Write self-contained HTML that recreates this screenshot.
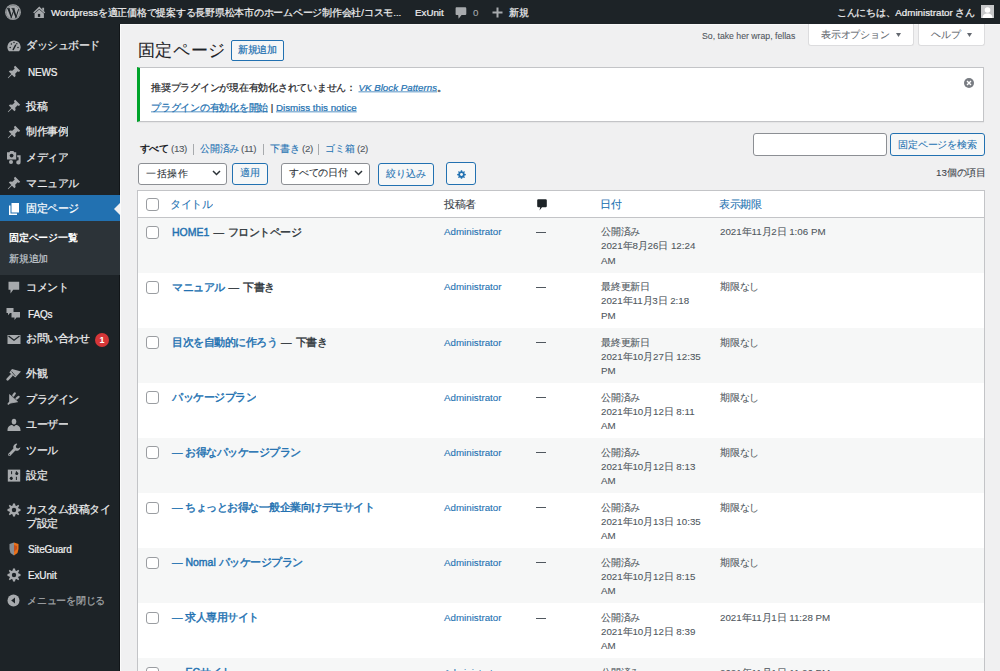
<!DOCTYPE html>
<html><head><meta charset="utf-8"><title>固定ページ</title>
<style>
html,body{margin:0;padding:0}
body{width:1000px;height:671px;overflow:hidden;position:relative;background:#f0f0f1;font-family:"Liberation Sans",sans-serif}
.t{position:absolute;white-space:nowrap;transform-origin:0 0}
svg{display:block}
b{font-weight:700}
.title b{font-weight:500;-webkit-text-stroke:0.55px currentColor}
.d{margin:0 1.5px}
</style></head><body>
<div style="position:absolute;left:0px;top:0px;width:1000px;height:24px;background:#1d2327"></div>
<div style="position:absolute;left:0px;top:24px;width:120px;height:647px;background:#1d2327"></div>
<div style="position:absolute;left:119px;top:24px;width:1px;height:647px;background:#111518"></div>
<div style="position:absolute;left:120px;top:24px;width:1px;height:647px;background:#fbfbfb"></div>
<div style="position:absolute;left:120px;top:24px;width:880px;height:1px;background:#f8f8f8"></div>
<svg style="position:absolute;left:4px;top:4px;" width="18" height="17" viewBox="0 0 18 17"><circle cx="9" cy="8.2" r="7.9" fill="#a7aaad"/><circle cx="9" cy="8.2" r="6.9" fill="none" stroke="#1d2327" stroke-width=".45" opacity=".6"/>
<path d="M3.3 4.4 H5.6 L7.9 12.4 L7.1 14.2 Z M7.9 4.4 H10.3 L12.6 12.4 L11.8 14.2 Z" fill="#1d2327"/><path d="M7.1 14 L9.3 7.4 M11.8 14 L14.6 5.2" stroke="#1d2327" stroke-width="1"/><path d="M2.8 4.4 H6 M7.4 4.4 H10.6" stroke="#1d2327" stroke-width=".7"/></svg>
<svg style="position:absolute;left:28px;top:2px;" width="24" height="20" viewBox="0 0 24 20"><path d="M5.1 10.4 L11.3 4.5 L17.3 10.4 L16.2 11.3 L11.3 6.7 L6.2 11.3 Z" fill="#a7aaad"/><path d="M14.2 5.8 H16.1 V9.2 L14.2 7.5Z" fill="#a7aaad"/><path d="M6.6 11.6 L11.3 7.6 L15.9 11.6 V15.9 H6.6Z" fill="#a7aaad"/><rect x="9.9" y="11.9" width="2.3" height="3" fill="#1d2327"/></svg>
<div class="t side" style="-webkit-text-stroke:0.28px currentColor;left:51px;top:2.50px;font-size:13.000px;line-height:26.67px;height:26.67px;transform:scale(0.75);color:#f0f0f1;font-weight:400;">Wordpressを適正価格で提案する長野県松本市のホームページ制作会社/コスモ...</div>
<div class="t side" style="-webkit-text-stroke:0.28px currentColor;left:415px;top:2.50px;font-size:13.000px;line-height:26.67px;height:26.67px;transform:scale(0.75);color:#f0f0f1;font-weight:400;">ExUnit</div>
<svg style="position:absolute;left:454.5px;top:6.5px;" width="12" height="12" viewBox="0 0 12 12"><path d="M1.3 0.3 H10.2 Q11.3 0.3 11.3 1.4 V7 Q11.3 8.1 10.2 8.1 H6.6 L3.6 11.7 L3.2 8.1 H1.3 Q0.6 8.1 0.6 7 V1.4 Q0.6 0.3 1.3 0.3Z" fill="#a7aaad"/></svg>
<div class="t " style="-webkit-text-stroke:0.12px currentColor;left:473px;top:2.50px;font-size:13.000px;line-height:26.67px;height:26.67px;transform:scale(0.75);color:#a7aaad;font-weight:400;">0</div>
<svg style="position:absolute;left:492px;top:7px;" width="11" height="11" viewBox="0 0 11 11"><path d="M4.5 0.5 H6.5 V4.5 H10.5 V6.5 H6.5 V10.5 H4.5 V6.5 H0.5 V4.5 H4.5 Z" fill="#a7aaad"/></svg>
<div class="t side" style="-webkit-text-stroke:0.28px currentColor;left:509px;top:2.50px;font-size:13.000px;line-height:26.67px;height:26.67px;transform:scale(0.75);color:#f0f0f1;font-weight:400;">新規</div>
<div class="t side" style="-webkit-text-stroke:0.28px currentColor;left:836px;top:2.50px;font-size:13.000px;line-height:26.67px;height:26.67px;transform:scale(0.75);color:#f0f0f1;font-weight:400;width:185.33px;text-align:right;">こんにちは、Administrator さん</div>
<div style="position:absolute;left:981px;top:5px;width:13px;height:13px;background:#c6c7c9"></div>
<svg style="position:absolute;left:981px;top:5px;" width="13" height="13" viewBox="0 0 13 13"><circle cx="6.5" cy="5" r="2.8" fill="#fff"/><path d="M1.5 13 C1.7 9.2 3.8 8.4 6.5 8.4 C9.2 8.4 11.3 9.2 11.5 13Z" fill="#fff"/></svg>
<div style="position:absolute;left:0px;top:195px;width:120px;height:26px;background:#2271b1"></div>
<div style="position:absolute;left:0px;top:221px;width:120px;height:54px;background:#2c3338"></div>
<svg style="position:absolute;left:114px;top:203px;" width="6" height="12" viewBox="0 0 6 12"><path d="M6 0 L0 6 L6 12Z" fill="#f0f0f1"/></svg>
<svg style="position:absolute;left:7px;top:38.8px;" width="14" height="14" viewBox="0 0 14 14"><path d="M1.4 11.6 A6.6 6.6 0 1 1 12.6 11.6 L12 12.2 H2 Z" fill="#a7aaad"/><path d="M6.2 10.6 L8.6 6.2" stroke="#1d2327" stroke-width="1.4" stroke-linecap="round"/><circle cx="3.2" cy="8.4" r=".75" fill="#1d2327"/><circle cx="4.4" cy="5" r=".75" fill="#1d2327"/><circle cx="7" cy="3.6" r=".75" fill="#1d2327"/><circle cx="9.8" cy="4.8" r=".75" fill="#1d2327"/><circle cx="11" cy="8.4" r=".75" fill="#1d2327"/></svg>
<div class="t side" style="-webkit-text-stroke:0.28px currentColor;left:26.2px;top:35.00px;font-size:14.000px;line-height:26.67px;height:26.67px;transform:scale(0.75);color:#f0f0f1;font-weight:400;">ダッシュボード</div>
<svg style="position:absolute;left:7px;top:64.5px;" width="14" height="14" viewBox="0 0 14 14"><path d="M8.2 0.8 L13.2 5.8 L11.9 7.1 L10.6 6.3 L8.2 8.7 L8.6 11 L7.4 12.2 L4.9 9.7 L1.2 13.2 L0.8 12.8 L4.3 9.1 L1.8 6.6 L3 5.4 L5.3 5.8 L7.7 3.4 L6.9 2.1 Z" fill="#a7aaad"/></svg>
<div class="t side" style="-webkit-text-stroke:0.28px currentColor;left:27.5px;top:62.50px;font-size:13.333px;line-height:26.67px;height:26.67px;transform:scale(0.75);color:#f0f0f1;font-weight:400;letter-spacing:-0.200px">NEWS</div>
<svg style="position:absolute;left:7px;top:99.3px;" width="14" height="14" viewBox="0 0 14 14"><path d="M8.2 0.8 L13.2 5.8 L11.9 7.1 L10.6 6.3 L8.2 8.7 L8.6 11 L7.4 12.2 L4.9 9.7 L1.2 13.2 L0.8 12.8 L4.3 9.1 L1.8 6.6 L3 5.4 L5.3 5.8 L7.7 3.4 L6.9 2.1 Z" fill="#a7aaad"/></svg>
<div class="t side" style="-webkit-text-stroke:0.28px currentColor;left:26.2px;top:95.50px;font-size:14.000px;line-height:26.67px;height:26.67px;transform:scale(0.75);color:#f0f0f1;font-weight:400;">投稿</div>
<svg style="position:absolute;left:7px;top:124.9px;" width="14" height="14" viewBox="0 0 14 14"><path d="M8.2 0.8 L13.2 5.8 L11.9 7.1 L10.6 6.3 L8.2 8.7 L8.6 11 L7.4 12.2 L4.9 9.7 L1.2 13.2 L0.8 12.8 L4.3 9.1 L1.8 6.6 L3 5.4 L5.3 5.8 L7.7 3.4 L6.9 2.1 Z" fill="#a7aaad"/></svg>
<div class="t side" style="-webkit-text-stroke:0.28px currentColor;left:26.2px;top:121.10px;font-size:14.000px;line-height:26.67px;height:26.67px;transform:scale(0.75);color:#f0f0f1;font-weight:400;">制作事例</div>
<svg style="position:absolute;left:7px;top:150.6px;" width="14" height="14" viewBox="0 0 14 14"><path d="M0 1.2 H2.4 L3.2 0 H6.4 L7.2 1.2 H9.2 V8.6 H0Z" fill="#a7aaad"/><circle cx="4.6" cy="4.6" r="1.9" fill="#1d2327"/><path d="M10.2 4.2 H13.6 V11.2 A2.2 2.2 0 1 1 11.6 9.2 V6.2 H10.2Z" fill="#a7aaad"/><circle cx="4" cy="11" r="2" fill="#a7aaad"/></svg>
<div class="t side" style="-webkit-text-stroke:0.28px currentColor;left:26.2px;top:146.80px;font-size:14.000px;line-height:26.67px;height:26.67px;transform:scale(0.75);color:#f0f0f1;font-weight:400;">メディア</div>
<svg style="position:absolute;left:7px;top:176.3px;" width="14" height="14" viewBox="0 0 14 14"><path d="M8.2 0.8 L13.2 5.8 L11.9 7.1 L10.6 6.3 L8.2 8.7 L8.6 11 L7.4 12.2 L4.9 9.7 L1.2 13.2 L0.8 12.8 L4.3 9.1 L1.8 6.6 L3 5.4 L5.3 5.8 L7.7 3.4 L6.9 2.1 Z" fill="#a7aaad"/></svg>
<div class="t side" style="-webkit-text-stroke:0.28px currentColor;left:26.2px;top:172.50px;font-size:14.000px;line-height:26.67px;height:26.67px;transform:scale(0.75);color:#f0f0f1;font-weight:400;">マニュアル</div>
<svg style="position:absolute;left:7px;top:201.5px;" width="14" height="14" viewBox="0 0 14 14"><path d="M4.5 1 H12 V10.5 H4.5Z" fill="#fff"/><path d="M2 3.5 H3.5 V11.5 H10 V13 H2Z" fill="#fff"/></svg>
<div class="t side" style="-webkit-text-stroke:0.28px currentColor;left:26.2px;top:197.70px;font-size:14.000px;line-height:26.67px;height:26.67px;transform:scale(0.75);color:#fff;font-weight:400;">固定ページ</div>
<svg style="position:absolute;left:7px;top:280.5px;" width="14" height="14" viewBox="0 0 14 14"><path d="M1.5 0.8 H12.2 V8.8 H6.2 L3.5 12.6 V8.8 H1.5Z" fill="#a7aaad"/></svg>
<div class="t side" style="-webkit-text-stroke:0.28px currentColor;left:26.2px;top:276.70px;font-size:14.000px;line-height:26.67px;height:26.67px;transform:scale(0.75);color:#f0f0f1;font-weight:400;">コメント</div>
<svg style="position:absolute;left:6px;top:306.5px;" width="15" height="14" viewBox="0 0 15 14"><path d="M0.5 1 H7.5 V6 H4 L2 8.2 V6 H0.5Z" fill="#a7aaad"/><path d="M5.5 5 H14 V10.5 H10.5 L8.5 13 V10.5 H5.5Z" fill="#a7aaad"/></svg>
<div class="t side" style="-webkit-text-stroke:0.28px currentColor;left:27.5px;top:304.50px;font-size:13.333px;line-height:26.67px;height:26.67px;transform:scale(0.75);color:#f0f0f1;font-weight:400;letter-spacing:-0.200px">FAQs</div>
<svg style="position:absolute;left:7px;top:333.2px;" width="14" height="12" viewBox="0 0 14 12"><path d="M0.5 2 H13.5 V11 H0.5Z" fill="#a7aaad"/><path d="M1.5 3 L7 7.2 L12.5 3" fill="none" stroke="#1d2327" stroke-width="1.2"/></svg>
<div class="t side" style="-webkit-text-stroke:0.28px currentColor;left:26.2px;top:328.40px;font-size:14.000px;line-height:26.67px;height:26.67px;transform:scale(0.75);color:#f0f0f1;font-weight:400;">お問い合わせ</div>
<svg style="position:absolute;left:4px;top:365.5px;" width="20" height="18" viewBox="0 0 20 18"><path d="M8 3 L17 5.6 L11.3 11.6 L5.4 6.6 Z" fill="#a7aaad"/><path d="M7.6 5.4 L11.4 10" stroke="#1d2327" stroke-width=".7"/><path d="M7.4 9.4 L3.6 13.4" stroke="#a7aaad" stroke-width="2.6" stroke-linecap="round"/></svg>
<div class="t side" style="-webkit-text-stroke:0.28px currentColor;left:26.2px;top:362.70px;font-size:14.000px;line-height:26.67px;height:26.67px;transform:scale(0.75);color:#f0f0f1;font-weight:400;">外観</div>
<svg style="position:absolute;left:4px;top:390.0px;" width="20" height="18" viewBox="0 0 20 18"><path d="M5.6 4.6 L13.6 11.8 L5.6 13.2 Z" fill="#a7aaad" stroke="#a7aaad" stroke-width=".8" stroke-linejoin="round"/><path d="M5.8 12.4 L4.4 13.8" stroke="#a7aaad" stroke-width="1.8" stroke-linecap="round"/><path d="M10.8 3.4 L9.3 5.5 M14.6 6.8 L12.5 8.6" stroke="#a7aaad" stroke-width="2.2" stroke-linecap="round"/></svg>
<div class="t side" style="-webkit-text-stroke:0.28px currentColor;left:26.2px;top:388.50px;font-size:14.000px;line-height:26.67px;height:26.67px;transform:scale(0.75);color:#f0f0f1;font-weight:400;">プラグイン</div>
<svg style="position:absolute;left:7px;top:417.7px;" width="14" height="14" viewBox="0 0 14 14"><ellipse cx="7" cy="3.6" rx="2.3" ry="2.9" fill="#a7aaad"/><path d="M0.5 12.4 C0.5 8.4 3 7 5.2 7 L7 8.6 L8.8 7 C11 7 13.5 8.4 13.5 12.4 V13 H0.5Z" fill="#a7aaad"/></svg>
<div class="t side" style="-webkit-text-stroke:0.28px currentColor;left:26.2px;top:413.90px;font-size:14.000px;line-height:26.67px;height:26.67px;transform:scale(0.75);color:#f0f0f1;font-weight:400;">ユーザー</div>
<svg style="position:absolute;left:7px;top:442.5px;" width="14" height="14" viewBox="0 0 14 14"><path d="M9.8 0.6 A3.8 3.8 0 0 0 6.4 5.6 L1.1 10.9 A1.5 1.5 0 0 0 3.1 12.9 L8.4 7.6 A3.8 3.8 0 0 0 13.4 4.2 L11.2 5.6 L9.4 5 L8.8 3.2 L10.2 1Z" fill="#a7aaad"/><circle cx="2.3" cy="11.7" r=".6" fill="#1d2327"/></svg>
<div class="t side" style="-webkit-text-stroke:0.28px currentColor;left:26.2px;top:439.70px;font-size:14.000px;line-height:26.67px;height:26.67px;transform:scale(0.75);color:#f0f0f1;font-weight:400;">ツール</div>
<svg style="position:absolute;left:7px;top:469.0px;" width="14" height="14" viewBox="0 0 14 14"><path d="M0.8 0.6 H13.2 V12.6 H0.8Z" fill="#a7aaad"/><path d="M4.6 2.2 V5.2 M4.6 7.8 V11 M9.4 2.2 V5.2 M9.4 7.8 V11" stroke="#1d2327" stroke-width="1"/><circle cx="4.2" cy="9.2" r="1.5" fill="#1d2327"/><circle cx="9.8" cy="4.4" r="1.5" fill="#1d2327"/></svg>
<div class="t side" style="-webkit-text-stroke:0.28px currentColor;left:26.2px;top:465.20px;font-size:14.000px;line-height:26.67px;height:26.67px;transform:scale(0.75);color:#f0f0f1;font-weight:400;">設定</div>
<svg style="position:absolute;left:8px;top:542.1px;" width="12" height="14" viewBox="0 0 12 14"><path d="M1.5 2 L6 0.5 V13.5 L2.5 11 L1.5 7Z" fill="#8a8f95"/><path d="M6 0.5 L10.5 2 L10.5 7 L9.5 11 L6 13.5Z" fill="#e8721c"/><path d="M6 3 L9 4 V7 L6 10Z" fill="#c9501a"/></svg>
<div class="t side" style="-webkit-text-stroke:0.28px currentColor;left:27.5px;top:540.10px;font-size:13.333px;line-height:26.67px;height:26.67px;transform:scale(0.75);color:#f0f0f1;font-weight:400;letter-spacing:-0.200px">SiteGuard</div>
<svg style="position:absolute;left:7px;top:567.9px;" width="14" height="14" viewBox="0 0 14 14"><path d="M6 0.5 H8 L8.4 2.4 L9.6 2.9 L11.2 1.8 L12.2 2.8 L11.1 4.4 L11.6 5.6 L13.5 6 V8 L11.6 8.4 L11.1 9.6 L12.2 11.2 L11.2 12.2 L9.6 11.1 L8.4 11.6 L8 13.5 H6 L5.6 11.6 L4.4 11.1 L2.8 12.2 L1.8 11.2 L2.9 9.6 L2.4 8.4 L0.5 8 V6 L2.4 5.6 L2.9 4.4 L1.8 2.8 L2.8 1.8 L4.4 2.9 L5.6 2.4 Z" fill="#a7aaad"/><circle cx="7" cy="7" r="2.2" fill="#1d2327"/></svg>
<div class="t side" style="-webkit-text-stroke:0.28px currentColor;left:27.5px;top:565.90px;font-size:13.333px;line-height:26.67px;height:26.67px;transform:scale(0.75);color:#f0f0f1;font-weight:400;letter-spacing:-0.200px">ExUnit</div>
<svg style="position:absolute;left:7px;top:503.4px;" width="14" height="14" viewBox="0 0 14 14"><path d="M6 0.5 H8 L8.4 2.4 L9.6 2.9 L11.2 1.8 L12.2 2.8 L11.1 4.4 L11.6 5.6 L13.5 6 V8 L11.6 8.4 L11.1 9.6 L12.2 11.2 L11.2 12.2 L9.6 11.1 L8.4 11.6 L8 13.5 H6 L5.6 11.6 L4.4 11.1 L2.8 12.2 L1.8 11.2 L2.9 9.6 L2.4 8.4 L0.5 8 V6 L2.4 5.6 L2.9 4.4 L1.8 2.8 L2.8 1.8 L4.4 2.9 L5.6 2.4 Z" fill="#a7aaad"/><circle cx="7" cy="7" r="2.2" fill="#1d2327"/></svg>
<div class="t side" style="-webkit-text-stroke:0.28px currentColor;left:26.2px;top:498.80px;font-size:14.000px;line-height:26.67px;height:26.67px;transform:scale(0.75);color:#f0f0f1;font-weight:400;">カスタム投稿タイ</div>
<div class="t side" style="-webkit-text-stroke:0.28px currentColor;left:26.2px;top:512.70px;font-size:14.000px;line-height:26.67px;height:26.67px;transform:scale(0.75);color:#f0f0f1;font-weight:400;">プ設定</div>
<div class="t " style="-webkit-text-stroke:0px currentColor;left:9px;top:227.50px;font-size:13.000px;line-height:26.67px;height:26.67px;transform:scale(0.75);color:#fff;font-weight:700;">固定ページ一覧</div>
<div class="t side" style="-webkit-text-stroke:0.28px currentColor;left:9px;top:248.50px;font-size:13.000px;line-height:26.67px;height:26.67px;transform:scale(0.75);color:rgba(240,246,252,.7);font-weight:400;">新規追加</div>
<div style="position:absolute;left:95px;top:332.5px;width:14px;height:14px;background:#d63638;border-radius:50%"></div>
<div class="t " style="-webkit-text-stroke:0px currentColor;left:95px;top:329.50px;font-size:12.000px;line-height:26.67px;height:26.67px;transform:scale(0.75);color:#fff;font-weight:700;width:18.67px;text-align:center;">1</div>
<svg style="position:absolute;left:7px;top:594px;" width="13" height="13" viewBox="0 0 13 13"><circle cx="6.5" cy="6.5" r="6" fill="#a7aaad"/><path d="M8 3.5 L4.2 6.5 L8 9.5Z" fill="#1d2327"/></svg>
<div class="t side" style="-webkit-text-stroke:0.28px currentColor;left:27px;top:590.50px;font-size:13.000px;line-height:26.67px;height:26.67px;transform:scale(0.75);color:#a7aaad;font-weight:400;">メニューを閉じる</div>
<div class="t " style="-webkit-text-stroke:0.12px currentColor;left:702px;top:25.50px;font-size:11.600px;line-height:26.67px;height:26.67px;transform:scale(0.75);color:#50575e;font-weight:400;">So, take her wrap, fellas</div>
<div style="position:absolute;left:808px;top:24px;width:104px;height:21px;background:#fff;border:1px solid #dcdcde;border-top:none;border-radius:0 0 3px 3px"></div>
<div class="t " style="-webkit-text-stroke:0.12px currentColor;left:821px;top:25.00px;font-size:13.000px;line-height:26.67px;height:26.67px;transform:scale(0.75);color:#646970;font-weight:400;">表示オプション</div>
<svg style="position:absolute;left:896px;top:33px;" width="5" height="4" viewBox="0 0 5 4"><path d="M0 0 H5 L2.5 4Z" fill="#646970"/></svg>
<div style="position:absolute;left:918px;top:24px;width:65px;height:21px;background:#fff;border:1px solid #dcdcde;border-top:none;border-radius:0 0 3px 3px"></div>
<div class="t " style="-webkit-text-stroke:0.12px currentColor;left:931px;top:25.00px;font-size:13.000px;line-height:26.67px;height:26.67px;transform:scale(0.75);color:#646970;font-weight:400;">ヘルプ</div>
<svg style="position:absolute;left:967px;top:33px;" width="5" height="4" viewBox="0 0 5 4"><path d="M0 0 H5 L2.5 4Z" fill="#646970"/></svg>
<div class="t nostroke" style="-webkit-text-stroke:0.12px currentColor;left:138px;top:40.00px;font-size:23.000px;line-height:26.67px;height:26.67px;transform:scale(0.75);color:#1d2327;font-weight:400;">固定ページ</div>
<div style="position:absolute;left:231px;top:40px;width:51px;height:19px;border:1px solid #2271b1;border-radius:2px;background:#f6f7f7"></div>
<div class="t side" style="-webkit-text-stroke:0.28px currentColor;left:231px;top:40.00px;font-size:13.000px;line-height:26.67px;height:26.67px;transform:scale(0.75);color:#2271b1;font-weight:400;width:70.67px;text-align:center;">新規追加</div>
<div style="position:absolute;left:137px;top:67px;width:843px;height:53px;background:#fff;border:1px solid #c3c4c7;border-left:3px solid #00a32a;box-shadow:0 1px 1px rgba(0,0,0,.04)"></div>
<div class="t side" style="-webkit-text-stroke:0.28px currentColor;left:151px;top:78.00px;font-size:13.000px;line-height:26.67px;height:26.67px;transform:scale(0.75);color:#1d2327;font-weight:400;">推奨プラグインが現在有効化されていません： <span style="color:#2271b1;font-style:italic;text-decoration:underline">VK Block Patterns</span>。</div>
<div class="t side" style="-webkit-text-stroke:0.28px currentColor;left:151px;top:97.50px;font-size:13.000px;line-height:26.67px;height:26.67px;transform:scale(0.75);color:#1d2327;font-weight:400;"><span style="color:#2271b1;text-decoration:underline">プラグインの有効化を開始</span> | <span style="color:#2271b1;text-decoration:underline">Dismiss this notice</span></div>
<svg style="position:absolute;left:964px;top:78px;" width="10" height="10" viewBox="0 0 10 10"><circle cx="5" cy="5" r="5" fill="#787c82"/><path d="M3 3 L7 7 M7 3 L3 7" stroke="#fff" stroke-width="1.4"/></svg>
<div class="t " style="-webkit-text-stroke:0px currentColor;left:140px;top:139.00px;font-size:13.000px;line-height:26.67px;height:26.67px;transform:scale(0.75);color:#1d2327;font-weight:700;letter-spacing:-0.533px">すべて</div>
<div class="t " style="-webkit-text-stroke:0.12px currentColor;left:171px;top:139.00px;font-size:13.000px;line-height:26.67px;height:26.67px;transform:scale(0.75);color:#50575e;font-weight:400;letter-spacing:-0.467px">(13)</div>
<div class="t " style="-webkit-text-stroke:0.12px currentColor;left:241px;top:139.00px;font-size:13.000px;line-height:26.67px;height:26.67px;transform:scale(0.75);color:#50575e;font-weight:400;letter-spacing:-0.467px">(11)</div>
<div class="t " style="-webkit-text-stroke:0.12px currentColor;left:301.5px;top:139.00px;font-size:13.000px;line-height:26.67px;height:26.67px;transform:scale(0.75);color:#50575e;font-weight:400;letter-spacing:-0.467px">(2)</div>
<div class="t " style="-webkit-text-stroke:0.12px currentColor;left:356.5px;top:139.00px;font-size:13.000px;line-height:26.67px;height:26.67px;transform:scale(0.75);color:#50575e;font-weight:400;letter-spacing:-0.467px">(2)</div>
<div class="t " style="-webkit-text-stroke:0.12px currentColor;left:200px;top:139.00px;font-size:13.000px;line-height:26.67px;height:26.67px;transform:scale(0.75);color:#2271b1;font-weight:400;">公開済み</div>
<div class="t " style="-webkit-text-stroke:0.12px currentColor;left:270px;top:139.00px;font-size:13.000px;line-height:26.67px;height:26.67px;transform:scale(0.75);color:#2271b1;font-weight:400;">下書き</div>
<div class="t " style="-webkit-text-stroke:0.12px currentColor;left:325px;top:139.00px;font-size:13.000px;line-height:26.67px;height:26.67px;transform:scale(0.75);color:#2271b1;font-weight:400;">ゴミ箱</div>
<div style="position:absolute;left:193.2px;top:143.5px;width:1px;height:11px;background:#a7aaad"></div>
<div style="position:absolute;left:263.2px;top:143.5px;width:1px;height:11px;background:#a7aaad"></div>
<div style="position:absolute;left:318.2px;top:143.5px;width:1px;height:11px;background:#a7aaad"></div>
<div style="position:absolute;left:753px;top:133px;width:132px;height:21px;background:#fff;border:1px solid #8c8f94;border-radius:3px"></div>
<div style="position:absolute;left:890px;top:133px;width:93px;height:21px;background:#f6f7f7;border:1px solid #2271b1;border-radius:3px"></div>
<div class="t " style="-webkit-text-stroke:0.12px currentColor;left:890px;top:134.50px;font-size:13.000px;line-height:26.67px;height:26.67px;transform:scale(0.75);color:#2271b1;font-weight:400;width:126.67px;text-align:center;">固定ページを検索</div>
<div style="position:absolute;left:138px;top:162.5px;width:87px;height:20px;background:#fff;border:1px solid #8c8f94;border-radius:3px"></div>
<div class="t " style="-webkit-text-stroke:0.12px currentColor;left:145.5px;top:163.00px;font-size:13.867px;line-height:26.67px;height:26.67px;transform:scale(0.75);color:#2c3338;font-weight:400;">一括操作</div>
<svg style="position:absolute;left:212px;top:170px;" width="9" height="6" viewBox="0 0 9 6"><path d="M1 1 L4.5 4.5 L8 1" fill="none" stroke="#2c3338" stroke-width="1.5"/></svg>
<div style="position:absolute;left:232px;top:162.5px;width:34px;height:20px;background:#f6f7f7;border:1px solid #2271b1;border-radius:3px"></div>
<div class="t " style="-webkit-text-stroke:0.12px currentColor;left:232px;top:163.00px;font-size:13.000px;line-height:26.67px;height:26.67px;transform:scale(0.75);color:#2271b1;font-weight:400;width:48.00px;text-align:center;">適用</div>
<div style="position:absolute;left:281px;top:162.5px;width:87px;height:20px;background:#fff;border:1px solid #8c8f94;border-radius:3px"></div>
<div class="t " style="-webkit-text-stroke:0.12px currentColor;left:288.5px;top:163.00px;font-size:13.467px;line-height:26.67px;height:26.67px;transform:scale(0.75);color:#2c3338;font-weight:400;">すべての日付</div>
<svg style="position:absolute;left:354px;top:170px;" width="9" height="6" viewBox="0 0 9 6"><path d="M1 1 L4.5 4.5 L8 1" fill="none" stroke="#2c3338" stroke-width="1.5"/></svg>
<div style="position:absolute;left:378px;top:163px;width:54px;height:21px;background:#f6f7f7;border:1px solid #2271b1;border-radius:3px"></div>
<div class="t " style="-webkit-text-stroke:0.12px currentColor;left:378px;top:164.00px;font-size:13.000px;line-height:26.67px;height:26.67px;transform:scale(0.75);color:#2271b1;font-weight:400;width:74.67px;text-align:center;">絞り込み</div>
<div style="position:absolute;left:446.2px;top:162px;width:28.3px;height:20.5px;background:#f6f7f7;border:1px solid #2271b1;border-radius:3px"></div>
<svg style="position:absolute;left:456.5px;top:169.5px;" width="9" height="9" viewBox="0 0 10 10"><path d="M4.3 0.3 H5.7 L6 1.7 L6.9 2 L8.1 1.3 L8.8 2 L8.1 3.2 L8.4 4.1 L9.8 4.4 V5.8 L8.4 6.1 L8.1 7 L8.8 8.2 L8.1 8.9 L6.9 8.2 L6 8.5 L5.7 9.8 H4.3 L4 8.5 L3.1 8.2 L1.9 8.9 L1.2 8.2 L1.9 7 L1.6 6.1 L0.2 5.8 V4.4 L1.6 4.1 L1.9 3.2 L1.2 2 L1.9 1.3 L3.1 2 L4 1.7 Z" fill="#2271b1"/><circle cx="5" cy="5" r="1.6" fill="#f6f7f7"/></svg>
<div class="t " style="-webkit-text-stroke:0.12px currentColor;left:936px;top:163.00px;font-size:13.000px;line-height:26.67px;height:26.67px;transform:scale(0.75);color:#3c434a;font-weight:400;width:65.33px;text-align:right;">13個の項目</div>
<div style="position:absolute;left:137px;top:190px;width:846px;height:481px;background:#fff;border:1px solid #c3c4c7;border-bottom:none"></div>
<div style="position:absolute;left:138px;top:217px;width:846px;height:1px;background:#c3c4c7"></div>
<div style="position:absolute;left:146.2px;top:198.1px;width:12.6px;height:12.6px;background:#fff;border:1.2px solid #9a9da1;border-radius:3px;box-sizing:border-box"></div>
<div class="t " style="-webkit-text-stroke:0.12px currentColor;left:170px;top:194.00px;font-size:14.000px;line-height:26.67px;height:26.67px;transform:scale(0.75);color:#2271b1;font-weight:400;">タイトル</div>
<div class="t " style="-webkit-text-stroke:0.12px currentColor;left:443.5px;top:194.20px;font-size:14.000px;line-height:26.67px;height:26.67px;transform:scale(0.75);color:#3c434a;font-weight:400;">投稿者</div>
<svg style="position:absolute;left:537px;top:199px;" width="10" height="12" viewBox="0 0 10 12"><path d="M1.3 0.2 H8.7 Q9.8 0.2 9.8 1.3 V7 Q9.8 8.2 8.7 8.2 H5 L2.5 11.6 L3.2 8.2 H1.3 Q0.2 8.2 0.2 7 V1.3 Q0.2 0.2 1.3 0.2Z" fill="#1d2327"/></svg>
<div class="t " style="-webkit-text-stroke:0.12px currentColor;left:600px;top:194.20px;font-size:14.000px;line-height:26.67px;height:26.67px;transform:scale(0.75);color:#2271b1;font-weight:400;">日付</div>
<div class="t " style="-webkit-text-stroke:0.12px currentColor;left:718.5px;top:194.20px;font-size:14.000px;line-height:26.67px;height:26.67px;transform:scale(0.75);color:#2271b1;font-weight:400;">表示期限</div>
<div style="position:absolute;left:138px;top:218.0px;width:846px;height:55px;background:#f6f7f7"></div>
<div style="position:absolute;left:146.2px;top:226.2px;width:12.6px;height:12.6px;background:#fff;border:1.2px solid #9a9da1;border-radius:3px;box-sizing:border-box"></div>
<div class="t title" style="-webkit-text-stroke:0.3px currentColor;left:171.5px;top:221.60px;font-size:14.000px;line-height:26.67px;height:26.67px;transform:scale(0.75);color:#2271b1;font-weight:400;"><b>HOME1</b> <span style="color:#2c3338;font-weight:400;-webkit-text-stroke:0.45px currentColor"><span class="d">—</span> フロントページ</span></div>
<div class="t " style="-webkit-text-stroke:0.12px currentColor;left:444px;top:222.40px;font-size:13.000px;line-height:26.67px;height:26.67px;transform:scale(0.75);color:#2271b1;font-weight:400;">Administrator</div>
<div style="position:absolute;left:536px;top:232px;width:9.5px;height:1px;background:#50575e"></div>
<div class="t " style="-webkit-text-stroke:0.12px currentColor;left:601px;top:222.40px;font-size:13.000px;line-height:26.67px;height:26.67px;transform:scale(0.75);color:#50575e;font-weight:400;">公開済み</div>
<div class="t " style="-webkit-text-stroke:0.12px currentColor;left:601px;top:236.40px;font-size:13.000px;line-height:26.67px;height:26.67px;transform:scale(0.75);color:#50575e;font-weight:400;">2021年8月26日 12:24</div>
<div class="t " style="-webkit-text-stroke:0.12px currentColor;left:601px;top:250.90px;font-size:13.000px;line-height:26.67px;height:26.67px;transform:scale(0.75);color:#50575e;font-weight:400;">AM</div>
<div class="t " style="-webkit-text-stroke:0.12px currentColor;left:720px;top:222.40px;font-size:13.000px;line-height:26.67px;height:26.67px;transform:scale(0.75);color:#50575e;font-weight:400;">2021年11月2日 1:06 PM</div>
<div style="position:absolute;left:146.2px;top:281.26px;width:12.6px;height:12.6px;background:#fff;border:1.2px solid #9a9da1;border-radius:3px;box-sizing:border-box"></div>
<div class="t title" style="-webkit-text-stroke:0.3px currentColor;left:171.5px;top:276.66px;font-size:14.000px;line-height:26.67px;height:26.67px;transform:scale(0.75);color:#2271b1;font-weight:400;"><b>マニュアル</b> <span style="color:#2c3338;font-weight:400;-webkit-text-stroke:0.45px currentColor"><span class="d">—</span> 下書き</span></div>
<div class="t " style="-webkit-text-stroke:0.12px currentColor;left:444px;top:277.46px;font-size:13.000px;line-height:26.67px;height:26.67px;transform:scale(0.75);color:#2271b1;font-weight:400;">Administrator</div>
<div style="position:absolute;left:536px;top:287px;width:9.5px;height:1px;background:#50575e"></div>
<div class="t " style="-webkit-text-stroke:0.12px currentColor;left:601px;top:277.46px;font-size:13.000px;line-height:26.67px;height:26.67px;transform:scale(0.75);color:#50575e;font-weight:400;">最終更新日</div>
<div class="t " style="-webkit-text-stroke:0.12px currentColor;left:601px;top:291.46px;font-size:13.000px;line-height:26.67px;height:26.67px;transform:scale(0.75);color:#50575e;font-weight:400;">2021年11月3日 2:18</div>
<div class="t " style="-webkit-text-stroke:0.12px currentColor;left:601px;top:305.96px;font-size:13.000px;line-height:26.67px;height:26.67px;transform:scale(0.75);color:#50575e;font-weight:400;">PM</div>
<div class="t " style="-webkit-text-stroke:0.12px currentColor;left:720px;top:277.46px;font-size:13.000px;line-height:26.67px;height:26.67px;transform:scale(0.75);color:#50575e;font-weight:400;">期限なし</div>
<div style="position:absolute;left:138px;top:328.12px;width:846px;height:55px;background:#f6f7f7"></div>
<div style="position:absolute;left:146.2px;top:336.32px;width:12.6px;height:12.6px;background:#fff;border:1.2px solid #9a9da1;border-radius:3px;box-sizing:border-box"></div>
<div class="t title" style="-webkit-text-stroke:0.3px currentColor;left:171.5px;top:331.72px;font-size:14.000px;line-height:26.67px;height:26.67px;transform:scale(0.75);color:#2271b1;font-weight:400;"><b>目次を自動的に作ろう</b> <span style="color:#2c3338;font-weight:400;-webkit-text-stroke:0.45px currentColor"><span class="d">—</span> 下書き</span></div>
<div class="t " style="-webkit-text-stroke:0.12px currentColor;left:444px;top:332.52px;font-size:13.000px;line-height:26.67px;height:26.67px;transform:scale(0.75);color:#2271b1;font-weight:400;">Administrator</div>
<div style="position:absolute;left:536px;top:342px;width:9.5px;height:1px;background:#50575e"></div>
<div class="t " style="-webkit-text-stroke:0.12px currentColor;left:601px;top:332.52px;font-size:13.000px;line-height:26.67px;height:26.67px;transform:scale(0.75);color:#50575e;font-weight:400;">最終更新日</div>
<div class="t " style="-webkit-text-stroke:0.12px currentColor;left:601px;top:346.52px;font-size:13.000px;line-height:26.67px;height:26.67px;transform:scale(0.75);color:#50575e;font-weight:400;">2021年10月27日 12:35</div>
<div class="t " style="-webkit-text-stroke:0.12px currentColor;left:601px;top:361.02px;font-size:13.000px;line-height:26.67px;height:26.67px;transform:scale(0.75);color:#50575e;font-weight:400;">PM</div>
<div class="t " style="-webkit-text-stroke:0.12px currentColor;left:720px;top:332.52px;font-size:13.000px;line-height:26.67px;height:26.67px;transform:scale(0.75);color:#50575e;font-weight:400;">期限なし</div>
<div style="position:absolute;left:146.2px;top:391.38px;width:12.6px;height:12.6px;background:#fff;border:1.2px solid #9a9da1;border-radius:3px;box-sizing:border-box"></div>
<div class="t title" style="-webkit-text-stroke:0.3px currentColor;left:171.5px;top:386.78px;font-size:14.000px;line-height:26.67px;height:26.67px;transform:scale(0.75);color:#2271b1;font-weight:400;"><b>パッケージプラン</b></div>
<div class="t " style="-webkit-text-stroke:0.12px currentColor;left:444px;top:387.58px;font-size:13.000px;line-height:26.67px;height:26.67px;transform:scale(0.75);color:#2271b1;font-weight:400;">Administrator</div>
<div style="position:absolute;left:536px;top:397px;width:9.5px;height:1px;background:#50575e"></div>
<div class="t " style="-webkit-text-stroke:0.12px currentColor;left:601px;top:387.58px;font-size:13.000px;line-height:26.67px;height:26.67px;transform:scale(0.75);color:#50575e;font-weight:400;">公開済み</div>
<div class="t " style="-webkit-text-stroke:0.12px currentColor;left:601px;top:401.58px;font-size:13.000px;line-height:26.67px;height:26.67px;transform:scale(0.75);color:#50575e;font-weight:400;">2021年10月12日 8:11</div>
<div class="t " style="-webkit-text-stroke:0.12px currentColor;left:601px;top:416.08px;font-size:13.000px;line-height:26.67px;height:26.67px;transform:scale(0.75);color:#50575e;font-weight:400;">AM</div>
<div class="t " style="-webkit-text-stroke:0.12px currentColor;left:720px;top:387.58px;font-size:13.000px;line-height:26.67px;height:26.67px;transform:scale(0.75);color:#50575e;font-weight:400;">期限なし</div>
<div style="position:absolute;left:138px;top:438.24px;width:846px;height:55px;background:#f6f7f7"></div>
<div style="position:absolute;left:146.2px;top:446.44px;width:12.6px;height:12.6px;background:#fff;border:1.2px solid #9a9da1;border-radius:3px;box-sizing:border-box"></div>
<div class="t title" style="-webkit-text-stroke:0.3px currentColor;left:171.5px;top:441.84px;font-size:14.000px;line-height:26.67px;height:26.67px;transform:scale(0.75);color:#2271b1;font-weight:400;"><b>— お得なパッケージプラン</b></div>
<div class="t " style="-webkit-text-stroke:0.12px currentColor;left:444px;top:442.64px;font-size:13.000px;line-height:26.67px;height:26.67px;transform:scale(0.75);color:#2271b1;font-weight:400;">Administrator</div>
<div style="position:absolute;left:536px;top:452px;width:9.5px;height:1px;background:#50575e"></div>
<div class="t " style="-webkit-text-stroke:0.12px currentColor;left:601px;top:442.64px;font-size:13.000px;line-height:26.67px;height:26.67px;transform:scale(0.75);color:#50575e;font-weight:400;">公開済み</div>
<div class="t " style="-webkit-text-stroke:0.12px currentColor;left:601px;top:456.64px;font-size:13.000px;line-height:26.67px;height:26.67px;transform:scale(0.75);color:#50575e;font-weight:400;">2021年10月12日 8:13</div>
<div class="t " style="-webkit-text-stroke:0.12px currentColor;left:601px;top:471.14px;font-size:13.000px;line-height:26.67px;height:26.67px;transform:scale(0.75);color:#50575e;font-weight:400;">AM</div>
<div class="t " style="-webkit-text-stroke:0.12px currentColor;left:720px;top:442.64px;font-size:13.000px;line-height:26.67px;height:26.67px;transform:scale(0.75);color:#50575e;font-weight:400;">期限なし</div>
<div style="position:absolute;left:146.2px;top:501.5px;width:12.6px;height:12.6px;background:#fff;border:1.2px solid #9a9da1;border-radius:3px;box-sizing:border-box"></div>
<div class="t title" style="-webkit-text-stroke:0.3px currentColor;left:171.5px;top:496.90px;font-size:14.000px;line-height:26.67px;height:26.67px;transform:scale(0.75);color:#2271b1;font-weight:400;"><b>— ちょっとお得な一般企業向けデモサイト</b></div>
<div class="t " style="-webkit-text-stroke:0.12px currentColor;left:444px;top:497.70px;font-size:13.000px;line-height:26.67px;height:26.67px;transform:scale(0.75);color:#2271b1;font-weight:400;">Administrator</div>
<div style="position:absolute;left:536px;top:507px;width:9.5px;height:1px;background:#50575e"></div>
<div class="t " style="-webkit-text-stroke:0.12px currentColor;left:601px;top:497.70px;font-size:13.000px;line-height:26.67px;height:26.67px;transform:scale(0.75);color:#50575e;font-weight:400;">公開済み</div>
<div class="t " style="-webkit-text-stroke:0.12px currentColor;left:601px;top:511.70px;font-size:13.000px;line-height:26.67px;height:26.67px;transform:scale(0.75);color:#50575e;font-weight:400;">2021年10月13日 10:35</div>
<div class="t " style="-webkit-text-stroke:0.12px currentColor;left:601px;top:526.20px;font-size:13.000px;line-height:26.67px;height:26.67px;transform:scale(0.75);color:#50575e;font-weight:400;">AM</div>
<div class="t " style="-webkit-text-stroke:0.12px currentColor;left:720px;top:497.70px;font-size:13.000px;line-height:26.67px;height:26.67px;transform:scale(0.75);color:#50575e;font-weight:400;">期限なし</div>
<div style="position:absolute;left:138px;top:548.36px;width:846px;height:55px;background:#f6f7f7"></div>
<div style="position:absolute;left:146.2px;top:556.5600000000001px;width:12.6px;height:12.6px;background:#fff;border:1.2px solid #9a9da1;border-radius:3px;box-sizing:border-box"></div>
<div class="t title" style="-webkit-text-stroke:0.3px currentColor;left:171.5px;top:551.96px;font-size:14.000px;line-height:26.67px;height:26.67px;transform:scale(0.75);color:#2271b1;font-weight:400;"><b>— Nomal パッケージプラン</b></div>
<div class="t " style="-webkit-text-stroke:0.12px currentColor;left:444px;top:552.76px;font-size:13.000px;line-height:26.67px;height:26.67px;transform:scale(0.75);color:#2271b1;font-weight:400;">Administrator</div>
<div style="position:absolute;left:536px;top:562px;width:9.5px;height:1px;background:#50575e"></div>
<div class="t " style="-webkit-text-stroke:0.12px currentColor;left:601px;top:552.76px;font-size:13.000px;line-height:26.67px;height:26.67px;transform:scale(0.75);color:#50575e;font-weight:400;">公開済み</div>
<div class="t " style="-webkit-text-stroke:0.12px currentColor;left:601px;top:566.76px;font-size:13.000px;line-height:26.67px;height:26.67px;transform:scale(0.75);color:#50575e;font-weight:400;">2021年10月12日 8:15</div>
<div class="t " style="-webkit-text-stroke:0.12px currentColor;left:601px;top:581.26px;font-size:13.000px;line-height:26.67px;height:26.67px;transform:scale(0.75);color:#50575e;font-weight:400;">AM</div>
<div class="t " style="-webkit-text-stroke:0.12px currentColor;left:720px;top:552.76px;font-size:13.000px;line-height:26.67px;height:26.67px;transform:scale(0.75);color:#50575e;font-weight:400;">期限なし</div>
<div style="position:absolute;left:146.2px;top:611.6200000000001px;width:12.6px;height:12.6px;background:#fff;border:1.2px solid #9a9da1;border-radius:3px;box-sizing:border-box"></div>
<div class="t title" style="-webkit-text-stroke:0.3px currentColor;left:171.5px;top:607.02px;font-size:14.000px;line-height:26.67px;height:26.67px;transform:scale(0.75);color:#2271b1;font-weight:400;"><b>— 求人専用サイト</b></div>
<div class="t " style="-webkit-text-stroke:0.12px currentColor;left:444px;top:607.82px;font-size:13.000px;line-height:26.67px;height:26.67px;transform:scale(0.75);color:#2271b1;font-weight:400;">Administrator</div>
<div style="position:absolute;left:536px;top:618px;width:9.5px;height:1px;background:#50575e"></div>
<div class="t " style="-webkit-text-stroke:0.12px currentColor;left:601px;top:607.82px;font-size:13.000px;line-height:26.67px;height:26.67px;transform:scale(0.75);color:#50575e;font-weight:400;">公開済み</div>
<div class="t " style="-webkit-text-stroke:0.12px currentColor;left:601px;top:621.82px;font-size:13.000px;line-height:26.67px;height:26.67px;transform:scale(0.75);color:#50575e;font-weight:400;">2021年10月12日 8:39</div>
<div class="t " style="-webkit-text-stroke:0.12px currentColor;left:601px;top:636.32px;font-size:13.000px;line-height:26.67px;height:26.67px;transform:scale(0.75);color:#50575e;font-weight:400;">AM</div>
<div class="t " style="-webkit-text-stroke:0.12px currentColor;left:720px;top:607.82px;font-size:13.000px;line-height:26.67px;height:26.67px;transform:scale(0.75);color:#50575e;font-weight:400;">2021年11月1日 11:28 PM</div>
<div style="position:absolute;left:138px;top:658.48px;width:846px;height:55px;background:#f6f7f7"></div>
<div style="position:absolute;left:146.2px;top:666.6800000000001px;width:12.6px;height:12.6px;background:#fff;border:1.2px solid #9a9da1;border-radius:3px;box-sizing:border-box"></div>
<div class="t title" style="-webkit-text-stroke:0.3px currentColor;left:171.5px;top:662.08px;font-size:14.000px;line-height:26.67px;height:26.67px;transform:scale(0.75);color:#2271b1;font-weight:400;"><b>— ECサイト</b></div>
<div class="t " style="-webkit-text-stroke:0.12px currentColor;left:444px;top:662.88px;font-size:13.000px;line-height:26.67px;height:26.67px;transform:scale(0.75);color:#2271b1;font-weight:400;">Administrator</div>
<div style="position:absolute;left:536px;top:673px;width:9.5px;height:1px;background:#50575e"></div>
<div class="t " style="-webkit-text-stroke:0.12px currentColor;left:601px;top:662.88px;font-size:13.000px;line-height:26.67px;height:26.67px;transform:scale(0.75);color:#50575e;font-weight:400;">公開済み</div>
<div class="t " style="-webkit-text-stroke:0.12px currentColor;left:601px;top:676.88px;font-size:13.000px;line-height:26.67px;height:26.67px;transform:scale(0.75);color:#50575e;font-weight:400;">2021年11月1日 11:26</div>
<div class="t " style="-webkit-text-stroke:0.12px currentColor;left:601px;top:691.38px;font-size:13.000px;line-height:26.67px;height:26.67px;transform:scale(0.75);color:#50575e;font-weight:400;">PM</div>
<div class="t " style="-webkit-text-stroke:0.12px currentColor;left:720px;top:662.88px;font-size:13.000px;line-height:26.67px;height:26.67px;transform:scale(0.75);color:#50575e;font-weight:400;">2021年11月1日 11:26 PM</div>
</body></html>
